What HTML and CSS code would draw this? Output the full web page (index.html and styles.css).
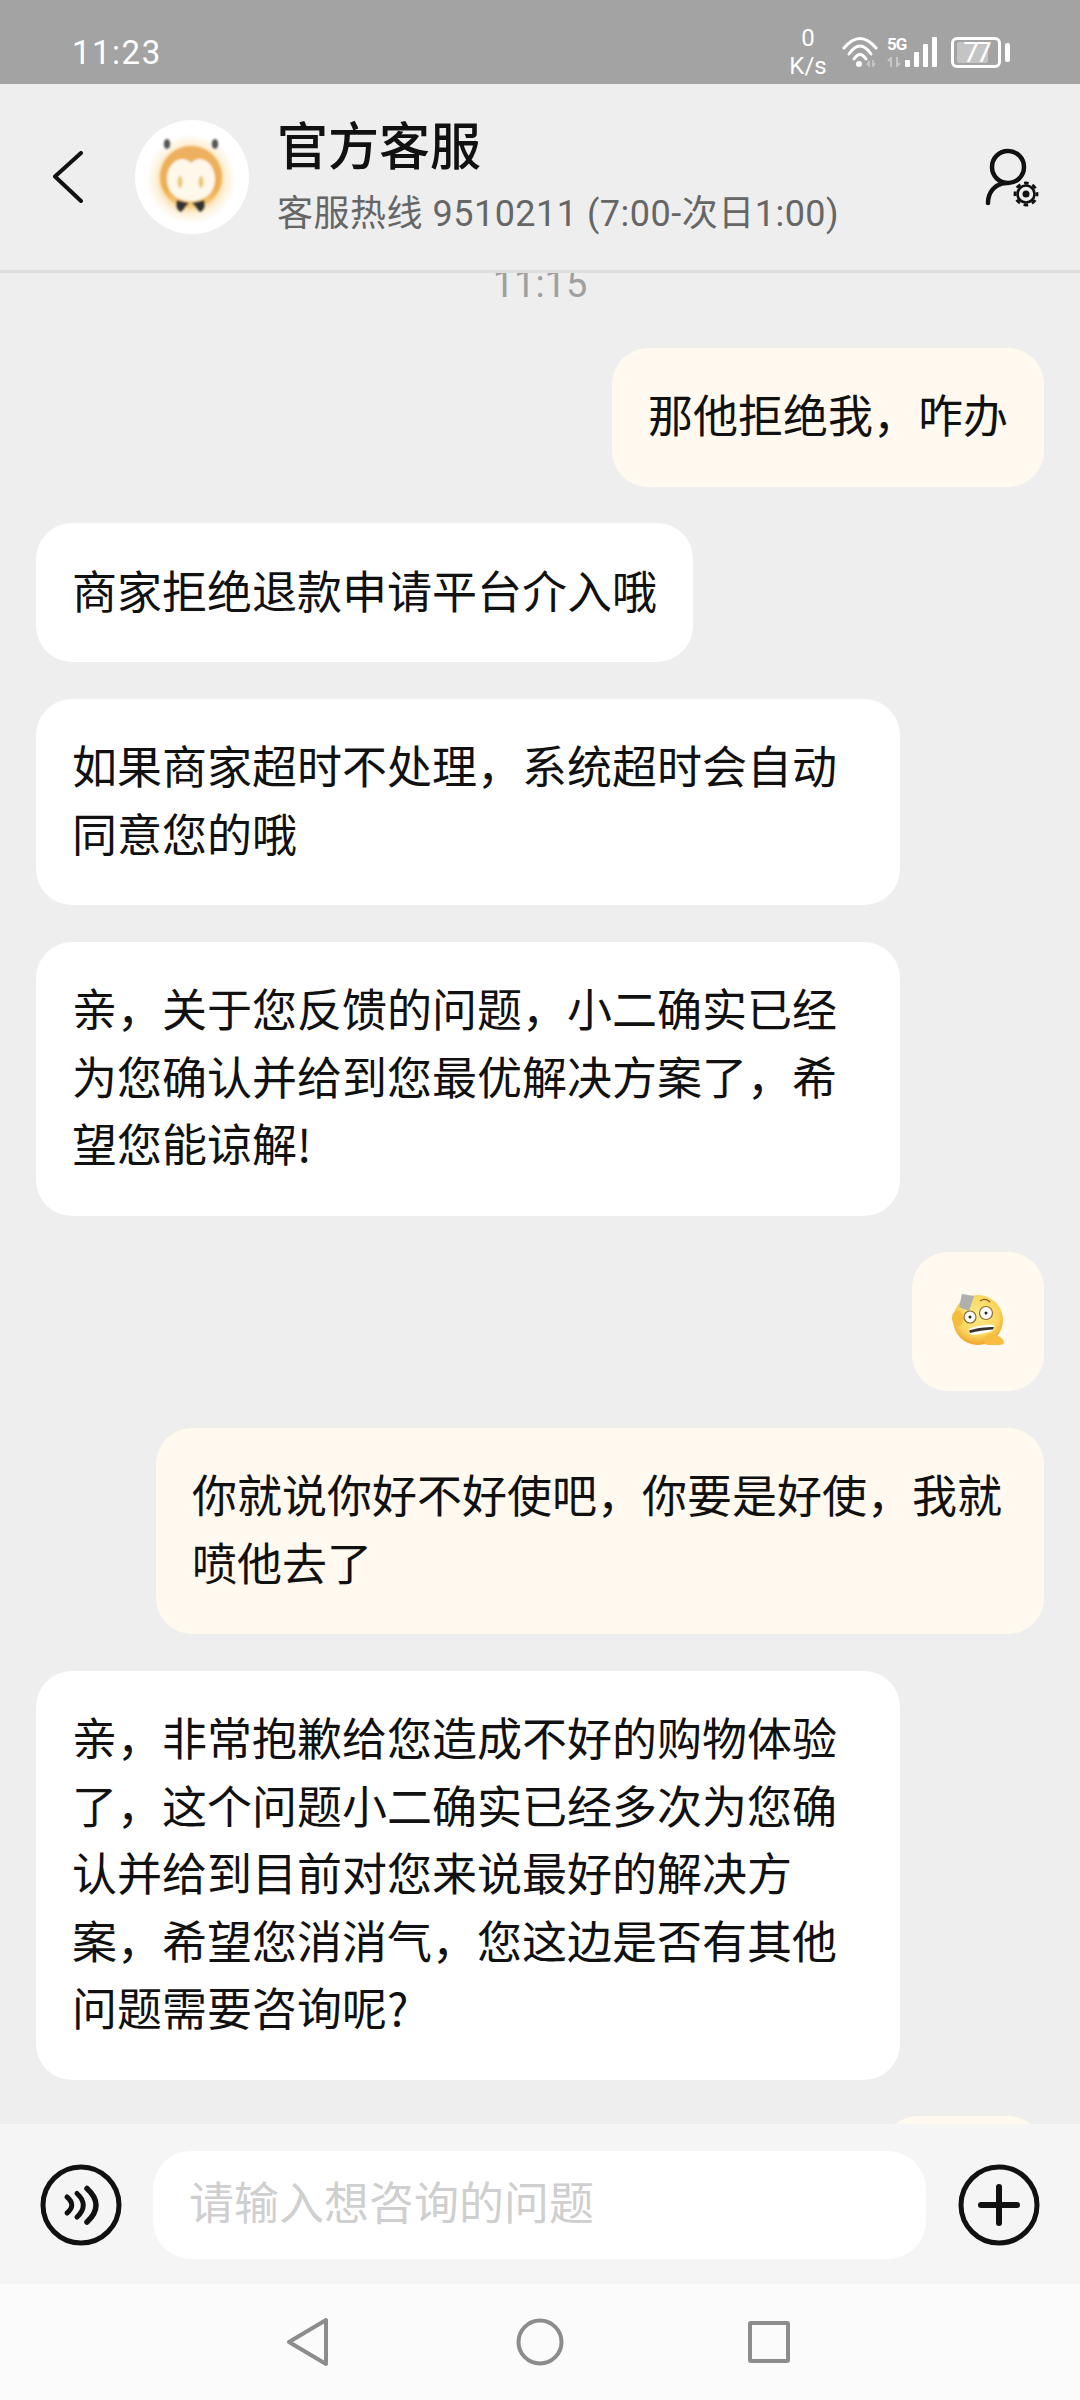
FILE: index.html
```html
<!DOCTYPE html>
<html lang="zh-CN">
<head>
<meta charset="utf-8">
<title>官方客服</title>
<link rel="stylesheet" href="styles.css">
</head>
<body>
<div class="phone">
  <div class="status">
    <span class="clock">11:23</span>
    <div class="status-right">
      <div class="speed"><span>0</span><span>K/s</span></div>
      <svg class="wifi" width="36" height="30" viewBox="0 0 36 30" fill="none" stroke="#fff" stroke-linecap="round">
        <path d="M2 11Q18 -8 34 11" stroke-width="3"/>
        <path d="M7 17Q18 1 29 17" stroke-width="3"/>
        <path d="M12 22Q18 13 24 22" stroke-width="3"/>
        <circle cx="17" cy="27" r="3" fill="#fff" stroke="none"/>
        <path d="M25 28l2-4v6M31 23v6l2-3" stroke="#c8c8c8" stroke-width="1.600" stroke-linecap="butt"/>
      </svg>
      <div class="net">
        <span class="net-g">5G</span>
        <svg width="16" height="10" viewBox="0 0 16 10" fill="none" stroke="#c8c8c8" stroke-width="2"><path d="M1 4l3-3v9M10 0v9l3-3"/></svg>
      </div>
      <svg class="bars" width="32" height="30" viewBox="0 0 32 30" fill="#fff">
        <rect x="0" y="23" width="5" height="7" rx="1"/>
        <rect x="9" y="15" width="5" height="15" rx="1"/>
        <rect x="18" y="7" width="5" height="23" rx="1"/>
        <rect x="27" y="0" width="5" height="30" rx="1"/>
      </svg>
      <div class="battery">
        <div class="battery-body"><i class="battery-fill"></i><span class="battery-num">77</span></div>
        <i class="battery-tip"></i>
      </div>
    </div>
  </div>

  <header class="topbar">
    <svg class="back" width="32" height="52" viewBox="0 0 32 52" fill="none" stroke="#111" stroke-width="4" stroke-linecap="round" stroke-linejoin="round"><path d="M29 2L3 25.500L29 50"/></svg>
    <svg class="avatar" width="116" height="116" viewBox="0 0 116 116">
      <defs>
        <radialGradient id="halo" cx="50%" cy="50%" r="50%">
          <stop offset="0.600" stop-color="#f8d698"/>
          <stop offset="0.800" stop-color="#fdf3de"/>
          <stop offset="1" stop-color="#ffffff"/>
        </radialGradient>
        <linearGradient id="head" x1="0" y1="0" x2="0" y2="1">
          <stop offset="0" stop-color="#eeb163"/>
          <stop offset="0.700" stop-color="#f0ae50"/>
          <stop offset="1" stop-color="#f8d084"/>
        </linearGradient>
        <filter id="soft"><feGaussianBlur stdDeviation="1"/></filter>
      </defs>
      <circle cx="58" cy="58" r="57" fill="#fff"/>
      <circle cx="57" cy="60" r="45" fill="url(#halo)"/>
      <g filter="url(#soft)">
        <ellipse cx="33" cy="25" rx="3.200" ry="5" fill="#555"/>
        <ellipse cx="81" cy="25" rx="3.200" ry="5" fill="#555"/>
        <circle cx="57" cy="58" r="31" fill="url(#head)"/>
        <path d="M57 44C47 34 33 44 33 60C33 76 46 82 57 82C68 82 81 76 81 60C81 44 67 34 57 44Z" fill="#fdf8ea"/>
        <ellipse cx="46" cy="63" rx="2.500" ry="6" fill="#ecc878"/>
        <ellipse cx="67" cy="63" rx="2.500" ry="6" fill="#ecc878"/>
        <path d="M55 84L43 81C41 85 43 92 47 93Z" fill="#333"/>
        <path d="M58 84L70 81C72 85 70 92 66 93Z" fill="#333"/>
      </g>
    </svg>
    <div class="titles">
      <h1 class="title">官方客服</h1>
      <p class="subtitle">客服热线 9510211 (7:00-次日1:00)</p>
    </div>
    <svg class="agent" width="56" height="60" viewBox="0 0 56 60" fill="none" stroke="#111">
      <circle cx="23" cy="20" r="16" stroke-width="4.500"/>
      <path d="M3 56C3 46 9 37 21 36" stroke-width="4.500" stroke-linecap="round"/>
      <circle cx="41" cy="47" r="8.500" stroke-width="2.600"/>
      <circle cx="41" cy="47" r="11" stroke-width="2.800" stroke-dasharray="4.640 4" stroke-dashoffset="2.300"/>
      <circle cx="41" cy="47" r="3.500" fill="#111" stroke="none"/>
    </svg>
  </header>

  <main class="chat">
    <div class="time">11:15</div>
    <div class="msg msg-me">那他拒绝我，咋办</div>
    <div class="msg msg-them">商家拒绝退款申请平台介入哦</div>
    <div class="msg msg-them">如果商家超时不处理，系统超时会自动同意您的哦</div>
    <div class="msg msg-them">亲，关于您反馈的问题，小二确实已经为您确认并给到您最优解决方案了，希望您能谅解!</div>
    <div class="msg msg-me msg-emoji">
      <svg width="52" height="51" viewBox="0 0 52 51">
        <defs>
          <radialGradient id="face" cx="50%" cy="40%" r="60%">
            <stop offset="0" stop-color="#fdeb8a"/>
            <stop offset="0.700" stop-color="#f9d45c"/>
            <stop offset="1" stop-color="#efa42c"/>
          </radialGradient>
        </defs>
        <circle cx="26" cy="26" r="25" fill="url(#face)"/>
        <path d="M10 0L22 2L17 17L7 13Z" fill="#aeb0b0"/>
        <path d="M0 24C0 18 5 15 8 17C12 20 12 30 8 32C3 33 0 29 0 24Z" fill="#f4bd40"/>
        <path d="M28 7C31 5 35 5 38 8" fill="none" stroke="#7a5a20" stroke-width="1.200"/>
        <circle cx="18" cy="23" r="6" fill="#fff" stroke="#8a6a30" stroke-width="1.200"/>
        <circle cx="18" cy="23" r="1.500" fill="#222"/>
        <circle cx="34" cy="19" r="6.500" fill="#fff" stroke="#8a6a30" stroke-width="1.200"/>
        <circle cx="34" cy="19" r="1.500" fill="#222"/>
        <path d="M17 35C23 32 35 30 42 31C43 35 41 37 37 38C31 40 23 41 20 41C17 40 16 38 17 35Z" fill="#fff"/>
        <path d="M17 36.500C24 34 34 33 42 33L41 35.500C33 36 25 37 18 39Z" fill="#3a3230"/>
        <path d="M32 47C33 41 38 38 42 41C47 41 52 45 52 49C52 50 50 51 46 51H36C34 51 32 49 32 47Z" fill="#f6bd42"/>
      </svg>
    </div>
    <div class="msg msg-me">你就说你好不好使吧，你要是好使，我就喷他去了</div>
    <div class="msg msg-them">亲，非常抱歉给您造成不好的购物体验了，这个问题小二确实已经多次为您确认并给到目前对您来说最好的解决方案，希望您消消气，您这边是否有其他问题需要咨询呢?</div>
    <div class="msg msg-me msg-next"></div>
  </main>

  <footer class="composer">
    <svg class="round-icon" width="82" height="82" viewBox="0 0 82 82" fill="none" stroke="#111" stroke-linecap="round">
      <circle cx="41" cy="41" r="38" stroke-width="5"/>
      <path d="M27 33Q36.500 41 27 49" stroke-width="5"/>
      <path d="M37 29.500Q49.500 41 37 53" stroke-width="5"/>
      <path d="M47 24.500Q65 41 47 58" stroke-width="5.500"/>
    </svg>
    <div class="field">请输入想咨询的问题</div>
    <svg class="round-icon" width="82" height="82" viewBox="0 0 82 82" fill="none" stroke="#111" stroke-linecap="round">
      <circle cx="41" cy="41" r="38" stroke-width="5"/>
      <path d="M41 23V59M23 41H59" stroke-width="6"/>
    </svg>
  </footer>

  <nav class="navbar">
    <svg width="44" height="50" viewBox="0 0 44 50" fill="none" stroke="#8c8c8c" stroke-width="4" stroke-linejoin="round"><path d="M40 3V47L3 25Z"/></svg>
    <svg width="48" height="48" viewBox="0 0 48 48" fill="none" stroke="#8c8c8c" stroke-width="4"><circle cx="24" cy="24" r="21.500"/></svg>
    <svg class="nav-square" width="44" height="44" viewBox="0 0 44 44" fill="none" stroke="#8c8c8c" stroke-width="4" stroke-linejoin="round"><rect x="3" y="3" width="38" height="38" rx="1"/></svg>
  </nav>
</div>
</body>
</html>
```

FILE: styles.css
```css
* { box-sizing: border-box; }
html, body { margin: 0; padding: 0; }
body {
  width: 1080px;
  height: 2400px;
  overflow: hidden;
  font-family: Roboto, "Noto Sans CJK SC", sans-serif;
  color: #111;
}
.phone {
  width: 1080px;
  height: 2400px;
  display: flex;
  flex-direction: column;
  background: #eeeeee;
}

/* status bar */
.status {
  height: 84px;
  flex: none;
  background: #a3a3a3;
  color: #fff;
  display: flex;
  align-items: center;
  justify-content: space-between;
  padding: 20px 70px 0 72px;
}
.clock { font-size: 33px; letter-spacing: 1.500px; }
.status-right { display: flex; align-items: center; }
.speed {
  display: flex;
  flex-direction: column;
  align-items: center;
  font-size: 24px;
  line-height: 28px;
  width: 36px;
  margin-right: 16px;
}
.wifi { margin-right: 9px; }
.net {
  display: flex;
  flex-direction: column;
  align-items: flex-start;
  width: 18px;
  height: 30px;
  line-height: 1;
}
.net-g { font-size: 17px; font-weight: 700; line-height: 14px; letter-spacing: -1px; margin-bottom: 6px; }
.bars { margin-right: 14px; }
.battery { display: flex; align-items: center; }
.battery-body {
  position: relative;
  width: 50px;
  height: 31px;
  border: 3px solid #fff;
  border-radius: 6px;
  font-size: 28px;
  line-height: 25px;
  letter-spacing: -3px;
  text-align: center;
}
.battery-fill { position: absolute; left: 3px; top: 2px; bottom: 2px; width: 31px; background: #c4c4c4; border-radius: 2px; }
.battery-num { position: relative; }
.battery-tip { width: 5px; height: 19px; background: #fff; border-radius: 2px; margin-left: 4px; }

/* header */
.topbar {
  height: 189px;
  flex: none;
  display: flex;
  align-items: center;
  background: #eeeeee;
  border-bottom: 3px solid #dfdfdf;
  padding: 0 39px 0 52px;
}
.back { flex: none; margin-right: 50px; }
.avatar { flex: none; margin-right: 27px; }
.titles { flex: 1; min-width: 0; }
.title { margin: 0; font-size: 51px; font-weight: 500; line-height: 60px; color: #111; position: relative; top: -1px; }
.subtitle { margin: 13px 0 0; font-size: 36px; line-height: 44px; letter-spacing: 0.500px; color: #666; white-space: nowrap; }
.agent { flex: none; }

/* chat */
.chat {
  flex: 1;
  min-height: 0;
  overflow: hidden;
  display: flex;
  flex-direction: column;
  padding: 0 36px;
  gap: 36.500px;
  font-family: "Noto Sans CJK SC", sans-serif;
}
.time {
  font-family: Roboto, sans-serif;
  font-size: 38px;
  line-height: 44px;
  height: 49px;
  flex: none;
  margin-top: -11px;
  text-align: center;
  color: #a0a0a0;
}
.msg {
  font-size: 45px;
  line-height: 67.500px;
  padding: 32.500px 36px 39px;
  border-radius: 36px;
  flex: none;
  color: #111;
}
.msg-them { align-self: flex-start; background: #fff; max-width: 864px; }
.msg-me { align-self: flex-end; background: #fff9ef; max-width: 888px; }
.msg-emoji { width: 132px; height: 139px; display: flex; align-items: center; justify-content: center; padding: 0 0 4px; }
.msg-next { width: 162px; height: 100px; padding: 0; }

/* composer */
.composer {
  height: 160px;
  flex: none;
  display: flex;
  align-items: center;
  background: #f5f5f5;
  padding: 2px 40px 0;
}
.round-icon { flex: none; }
.field {
  flex: 1;
  height: 108px;
  margin: 0 32px 0 31px;
  padding-left: 36px;
  background: #fff;
  border-radius: 38px;
  font-family: "Noto Sans CJK SC", sans-serif;
  font-size: 45px;
  line-height: 100px;
  color: #cfcfcf;
}

/* navigation */
.navbar {
  height: 116px;
  flex: none;
  display: flex;
  align-items: center;
  justify-content: center;
  gap: 186px;
  padding-right: 3px;
  background: #fbfbfb;
}
.nav-square { margin-left: -3px; }
```
